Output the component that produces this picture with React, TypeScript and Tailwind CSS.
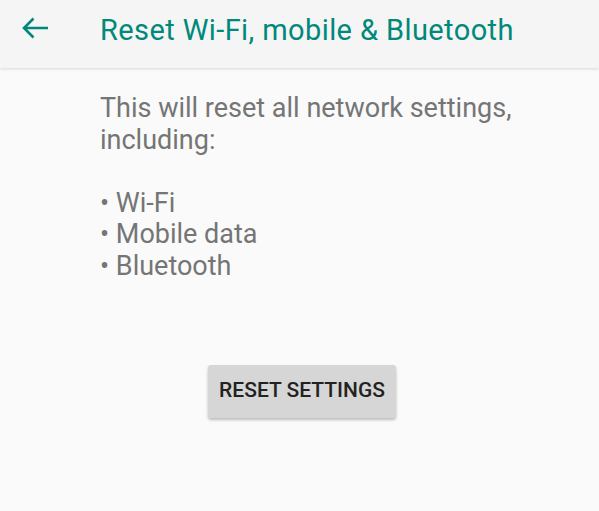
import { ReactNode } from 'react';

const font = { fontFamily: 'Roboto, "Noto Sans", sans-serif' };

const BackArrow = () => (
  <svg width="27" height="22" viewBox="0 0 27 22" className="text-[#00897b]">
    <path d="M26 11H2.5M11.5 1.5 2 11l9.5 9.5" fill="none" stroke="currentColor" strokeWidth="2.6" />
  </svg>
);

const Bullet = ({ children }: { children: ReactNode }) => <p>• {children}</p>;

const App = () => {
  return (
    <div className="flex h-[511px] w-[599px] flex-col overflow-hidden bg-[#fafafa]" style={font}>
      <header className="relative z-10 flex h-[68px] shrink-0 items-center bg-[#f5f5f5] shadow-[0_1px_3px_rgba(0,0,0,0.14)]">
        <div className="flex w-[100px] items-center pl-[22px] pb-[13px]">
          <BackArrow />
        </div>
        <h1 className="pt-[5px] pb-[13px] text-[29px] leading-none tracking-[0.4px] text-[#00897b]">
          Reset Wi-Fi, mobile &amp; Bluetooth
        </h1>
      </header>
      <main className="flex flex-col pl-[100px] pt-[25px]">
        <div className="text-[27px] leading-[31.6px] text-[#757575]">
          <p>This will reset all network settings,</p>
          <p>including:</p>
          <p>&nbsp;</p>
          <Bullet>Wi-Fi</Bullet>
          <Bullet>Mobile data</Bullet>
          <Bullet>Bluetooth</Bullet>
        </div>
      </main>
      <div className="mt-[82px] flex justify-center pl-[5px]">
        <button className="h-[53px] w-[188px] rounded-[3px] bg-[#d6d6d6] text-[21px] font-medium text-[#222222] shadow-[0_2px_3px_rgba(0,0,0,0.25)]">
          RESET SETTINGS
        </button>
      </div>
    </div>
  );
};

export default App;
